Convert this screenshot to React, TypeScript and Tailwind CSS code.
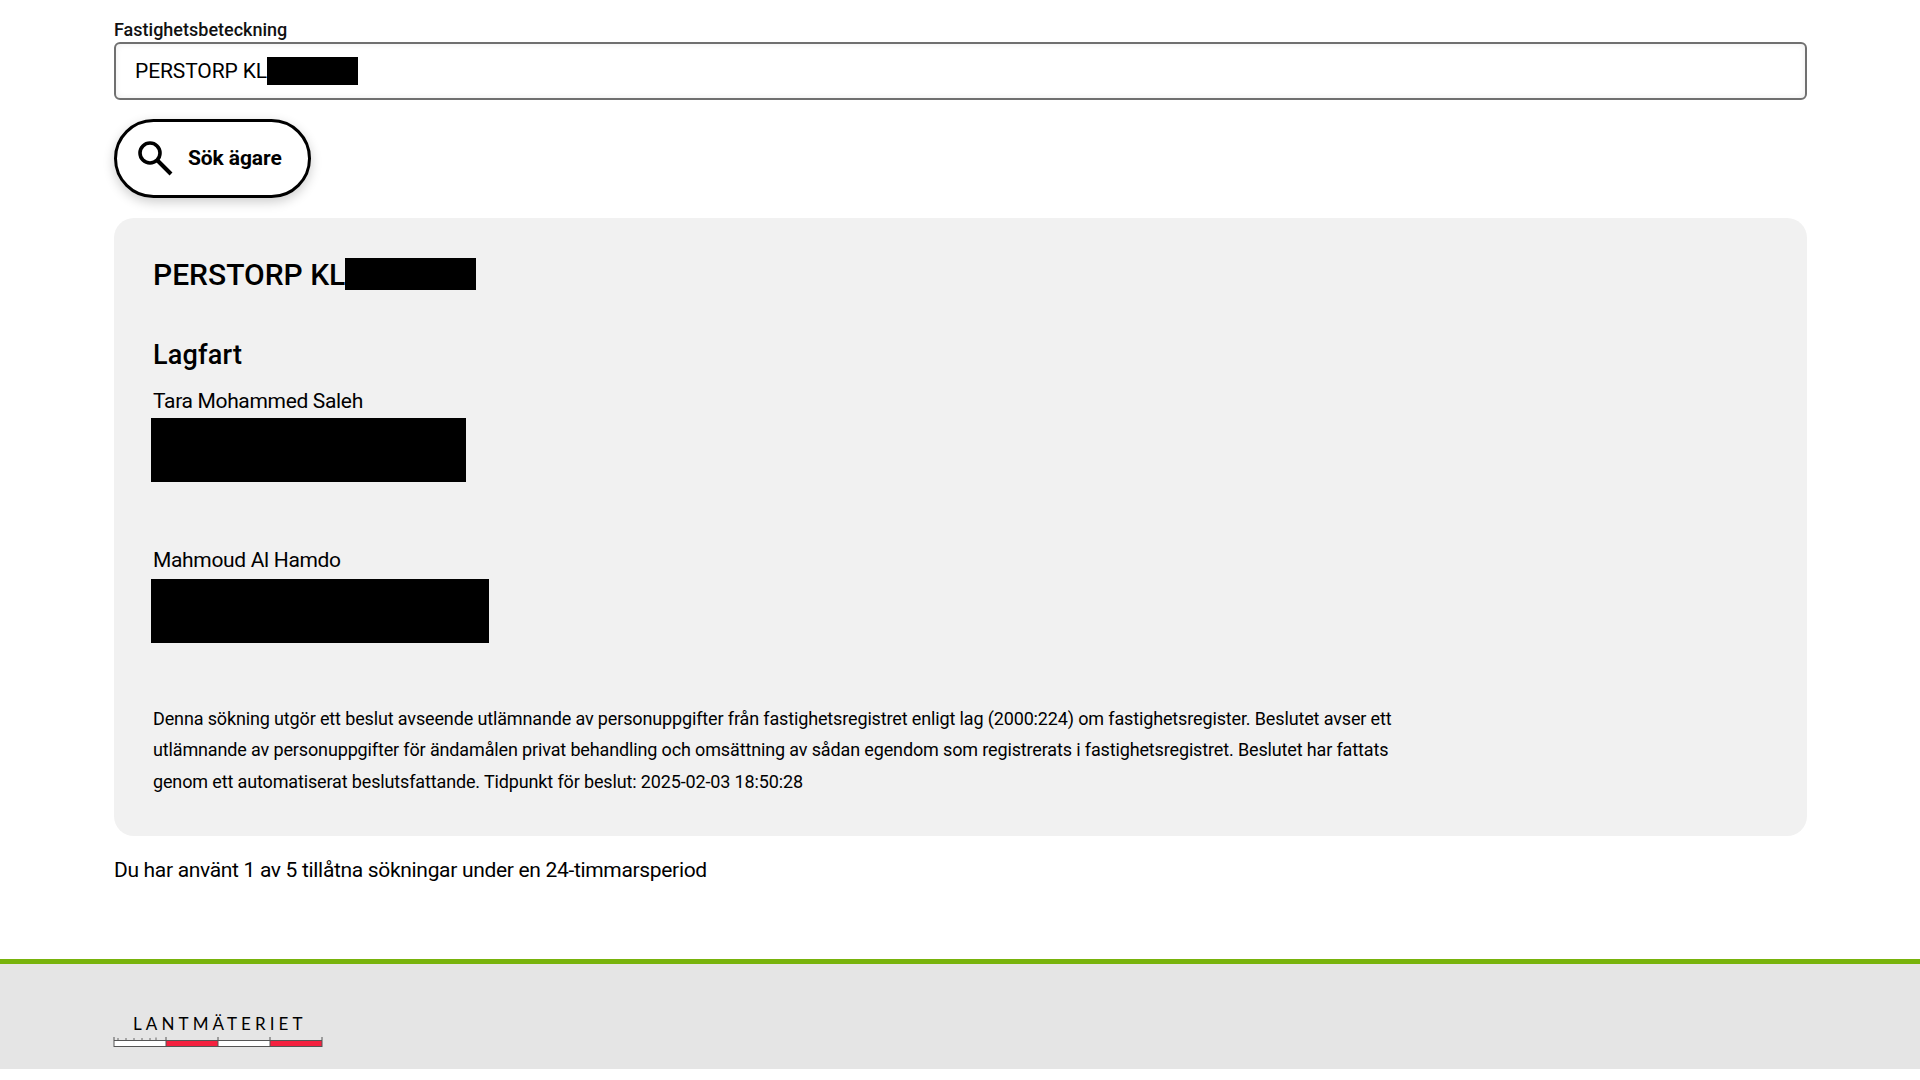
function Logo() {
  return (
    <div className="flex w-[210px] flex-col">
      <span className="pl-[19px] text-[17px] leading-[18px] tracking-[4.1px] text-black font-['Lato',sans-serif]">
        LANTMÄTERIET
      </span>
      <svg className="-ml-[1px] mt-[3px] block" width="210" height="12" viewBox="0 0 210 12" fill="none">
        <rect x="1" y="5" width="52" height="5.5" fill="#fff" />
        <rect x="53" y="5" width="52" height="5.5" fill="#f4213f" />
        <rect x="105" y="5" width="52" height="5.5" fill="#fff" />
        <rect x="157" y="5" width="52" height="5.5" fill="#f4213f" />
        <path d="M1 4.5H209M1 10.5H209" stroke="#555" strokeWidth="1" />
        <path d="M1 1V11M53 1V11M105 1V11M157 1V11M209 1V11" stroke="#555" strokeWidth="1" />
        <path d="M5 2V4M13 2V4M21 2V4M29 2V4M37 2V4M43 1.5V4" stroke="#666" strokeWidth="1" />
      </svg>
    </div>
  );
}

export default function App() {
  return (
    <div className="flex min-h-[1080px] flex-col bg-white text-black font-['Roboto',sans-serif]">
      <main className="flex h-[959px] flex-col pl-[114px] pr-[113px] pt-[19px]">
        {/* Search form */}
        <label className="text-[18px] font-medium leading-[21px] text-[#111]">Fastighetsbeteckning</label>
        <div className="mt-[2px] flex h-[58px] items-center rounded-[6px] border-2 border-[#707070] pl-[19px] shadow-[inset_0_0_6px_rgba(0,0,0,0.08)]">
          <span className="text-[21px] leading-none tracking-[-0.1px]">PERSTORP KL</span>
          <span className="h-[28px] w-[91px] bg-black" />
        </div>
        <button className="mt-[19px] flex h-[79px] w-[197px] items-center rounded-full border-[3px] border-black bg-white pl-[20px] shadow-[0_4px_12px_rgba(0,0,0,0.2)]">
          <svg className="shrink-0" width="38" height="38" viewBox="0 0 38 38" fill="none" stroke="black">
            <circle cx="13" cy="13" r="10" strokeWidth="3.6" />
            <path d="M20.5 20.5L34 34" strokeWidth="4" />
          </svg>
          <span className="ml-[13px] text-[21px] font-bold leading-none tracking-[-0.1px]">Sök ägare</span>
        </button>

        {/* Result card */}
        <section className="mt-[20px] h-[618px] rounded-[20px] bg-[#f1f1f1] pl-[39px] pt-[40px]">
          <div className="flex h-[32px] items-center">
            <h1 className="relative top-[1px] text-[30px] font-medium leading-none">PERSTORP KL</h1>
            <span className="h-[32px] w-[131px] bg-black" />
          </div>
          <h2 className="mt-[49px] text-[27px] font-medium leading-[32px] tracking-[0.2px]">Lagfart</h2>
          <p className="mt-[17px] text-[21px] leading-[26px] tracking-[-0.33px]">Tara Mohammed Saleh</p>
          <div className="-ml-[2px] mt-[4px] h-[64px] w-[315px] bg-black" />
          <p className="mt-[65px] text-[21px] leading-[26px] tracking-[-0.33px]">Mahmoud Al Hamdo</p>
          <div className="-ml-[2px] mt-[6px] h-[64px] w-[338px] bg-black" />
          <p className="mt-[60px] w-[1245px] text-[18px] leading-[31.4px] tracking-[-0.14px]">
            Denna sökning utgör ett beslut avseende utlämnande av personuppgifter från fastighetsregistret enligt lag
            (2000:224) om fastighetsregister. Beslutet avser ett utlämnande av personuppgifter för ändamålen privat
            behandling och omsättning av sådan egendom som registrerats i fastighetsregistret. Beslutet har fattats genom
            ett automatiserat beslutsfattande. Tidpunkt för beslut: 2025-02-03 18:50:28
          </p>
        </section>
        <p className="mt-[21px] text-[21px] leading-[26px] tracking-[-0.32px]">Du har använt 1 av 5 tillåtna sökningar under en 24-timmarsperiod</p>
      </main>

      {/* Footer */}
      <footer className="h-[110px] border-t-[5px] border-[#78b30c] bg-[#e5e5e5] pl-[114px] pt-[51px]">
        <Logo />
      </footer>
    </div>
  );
}
